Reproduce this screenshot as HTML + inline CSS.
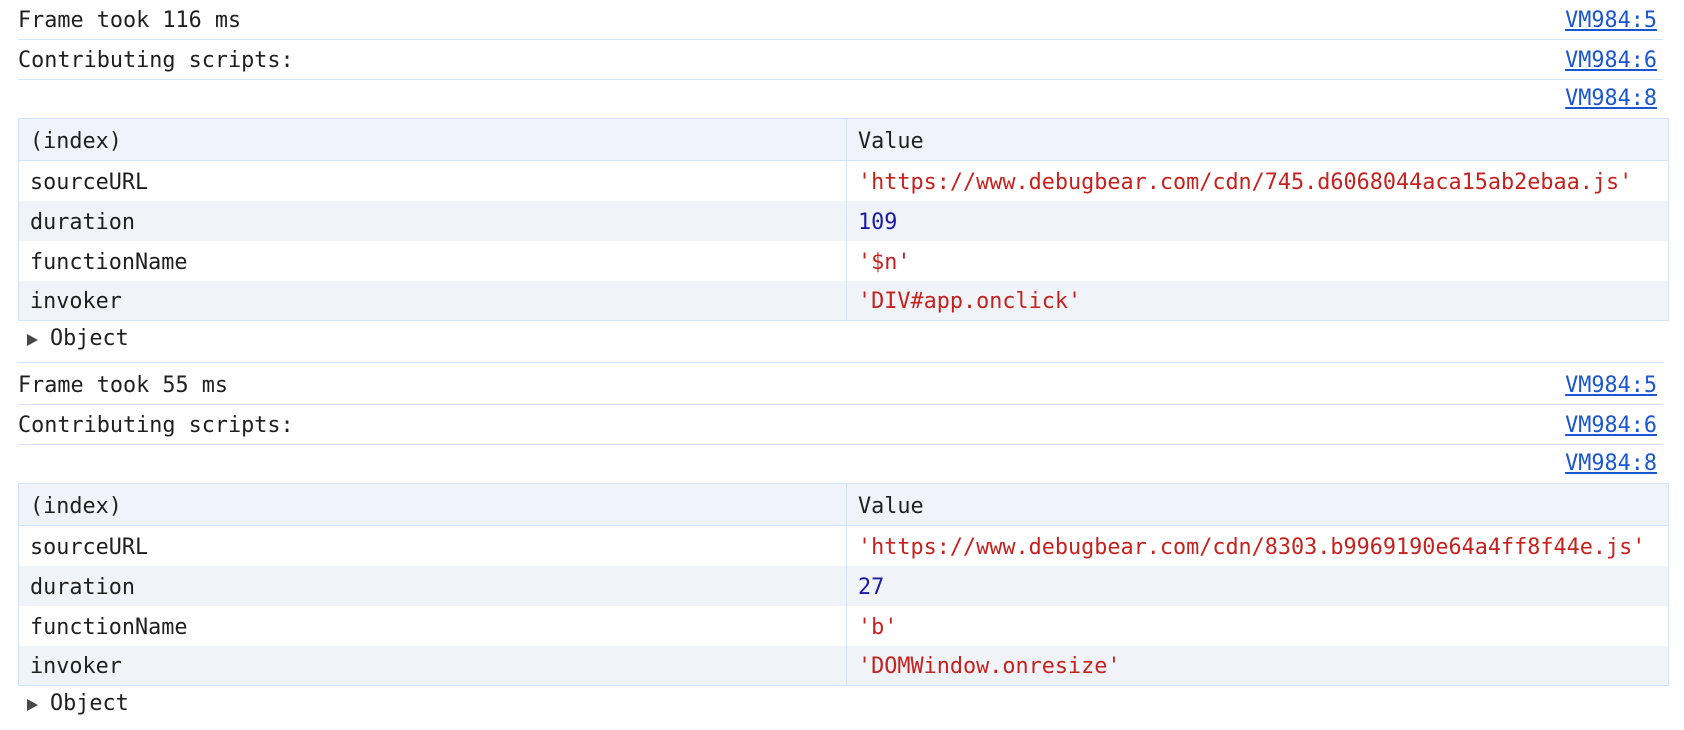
<!DOCTYPE html>
<html><head><meta charset="utf-8"><style>
body{margin:0;width:1684px;height:724px;background:#fff;font-family:"DejaVu Sans Mono","Liberation Mono",monospace;font-size:21.8px;color:#1f1f1f;position:relative;overflow:hidden}
.b{position:absolute;left:0;width:1684px;height:365px}
.l{position:absolute;left:18px;width:1645px;height:40px;line-height:41px;border-bottom:1.5px solid #d3e3fd;box-sizing:border-box}
.t{position:absolute;left:18px}
.a{position:absolute;right:6px;color:#1a56cf;text-decoration:underline}
table{position:absolute;left:18px;top:118px;width:1651px;border-collapse:collapse;border:1.5px solid #d3e3fd}
td{height:40px;padding:3px 0 0 11px;border-left:1.5px solid #d3e3fd;box-sizing:border-box;white-space:nowrap}
td:first-child{width:828px;border-left:none}
tr.h td{background:#f0f4fa;border-bottom:1.5px solid #d3e3fd;height:42px}
tr.g td{background:#f0f4f9}
.s{color:#c5221f}.n{color:#1a1aa6}
.o{position:absolute;left:18px;top:322px;width:1645px;height:41px;line-height:34px;border-bottom:1.5px solid #d3e3fd;box-sizing:border-box}
.tri{position:absolute;left:9px;top:12px;width:0;height:0;border-left:11px solid #474747;border-top:6.5px solid transparent;border-bottom:6.5px solid transparent}
</style></head><body>
<div class="b" style="top:0">
<div class="l" style="top:0"><span class="t" style="left:0">Frame took 116 ms</span><span class="a">VM984:5</span></div>
<div class="l" style="top:40px"><span class="t" style="left:0">Contributing scripts:</span><span class="a">VM984:6</span></div>
<div class="l" style="top:80px;border:none;line-height:37px"><span class="a">VM984:8</span></div>
<table>
<tr class="h"><td>(index)</td><td>Value</td></tr>
<tr><td>sourceURL</td><td class="s">'https://www.debugbear.com/cdn/745.d6068044aca15ab2ebaa.js'</td></tr>
<tr class="g"><td>duration</td><td class="n">109</td></tr>
<tr><td>functionName</td><td class="s">'$n'</td></tr>
<tr class="g"><td>invoker</td><td class="s">'DIV#app.onclick'</td></tr>
</table>
<div class="o"><div class="tri"></div><span class="t" style="left:32px">Object</span></div>
</div>
<div class="b" style="top:365px">
<div class="l" style="top:0"><span class="t" style="left:0">Frame took 55 ms</span><span class="a">VM984:5</span></div>
<div class="l" style="top:40px"><span class="t" style="left:0">Contributing scripts:</span><span class="a">VM984:6</span></div>
<div class="l" style="top:80px;border:none;line-height:37px"><span class="a">VM984:8</span></div>
<table>
<tr class="h"><td>(index)</td><td>Value</td></tr>
<tr><td>sourceURL</td><td class="s">'https://www.debugbear.com/cdn/8303.b9969190e64a4ff8f44e.js'</td></tr>
<tr class="g"><td>duration</td><td class="n">27</td></tr>
<tr><td>functionName</td><td class="s">'b'</td></tr>
<tr class="g"><td>invoker</td><td class="s">'DOMWindow.onresize'</td></tr>
</table>
<div class="o" style="border:none"><div class="tri"></div><span class="t" style="left:32px">Object</span></div>
</div>
</body></html>
